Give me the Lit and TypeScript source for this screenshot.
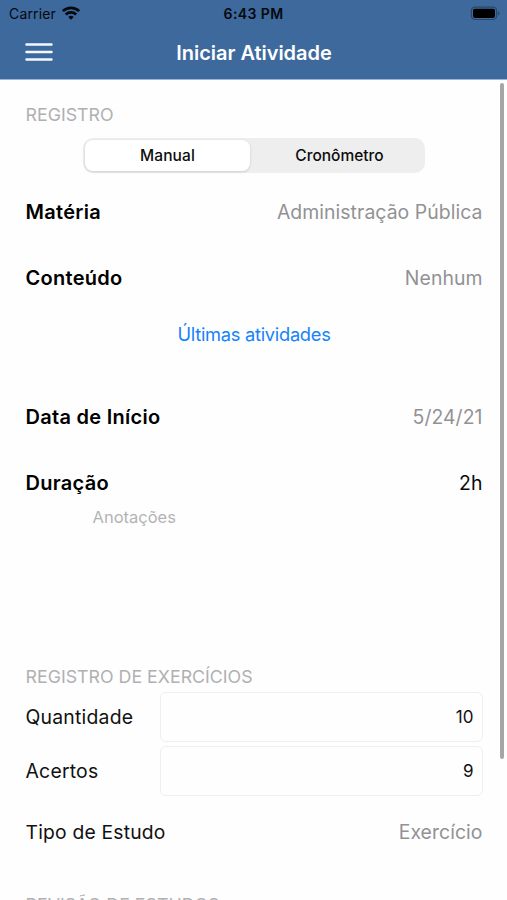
import { LitElement, html, css } from "lit";
import { customElement, property, state } from "lit/decorators.js";
import { classMap } from "lit/directives/class-map.js";

@customElement("status-bar")
class StatusBar extends LitElement {
  static styles = css`
    :host { display: grid; grid-template-columns: 1fr auto 1fr; align-items: center; height: 27px; padding: 0 7px 0 9px; color: #05080d; }
    .carrier { display: flex; align-items: center; gap: 6px; font-size: 14px; letter-spacing: 0.15px; }
    .time { font-size: 14px; font-weight: 600; letter-spacing: 0.4px; margin-right: 2px; }
    .battery { justify-self: end; display: block; }
    .wifi { display: block; margin-top: -2px; }
  `;
  render() {
    return html`
      <div class="carrier"><span>Carrier</span>
        <svg class="wifi" width="18" height="14" viewBox="0 0 18 14" fill="none" stroke="currentColor" stroke-width="2.7">
          <path d="M0.8 5.1a11.8 11.8 0 0 1 16.4 0" />
          <path d="M3.8 8.5a7.5 7.5 0 0 1 10.4 0" />
          <path d="M9 13.7L6.3 11a3.9 3.9 0 0 1 5.4 0z" fill="currentColor" stroke="none" />
        </svg>
      </div>
      <div class="time">6:43 PM</div>
      <svg class="battery" width="30" height="15" viewBox="0 0 30 15">
        <rect x="1.4" y="1.1" width="25.2" height="12.4" rx="3.6" fill="none" stroke="#294768" stroke-width="1.2" />
        <rect x="3" y="2.7" width="22" height="9.2" rx="1.8" fill="#000" />
        <path d="M28 5.2v4.2a2.3 2.3 0 0 0 0-4.2z" fill="#294768" />
      </svg>`;
  }
}

@customElement("nav-bar")
class NavBar extends LitElement {
  @property() heading = "";
  static styles = css`
    :host { display: grid; grid-template-columns: 1fr auto 1fr; align-items: center; height: 51px; padding: 0 24px 1px 25px; box-sizing: border-box; color: #fff; }
    .menu { display: block; }
    .title { padding-top: 2px; font-size: 20px; font-weight: 600; letter-spacing: -0.02px; }
  `;
  render() {
    return html`
      <svg class="menu" width="28" height="20" viewBox="0 0 28 20" stroke="#f4f8ff" stroke-width="2.5" stroke-linecap="round">
        <path d="M1.5 2.4h25M1.5 10h25M1.5 17.4h25" />
      </svg>
      <div class="title">${this.heading}</div>`;
  }
}

@customElement("segmented-control")
class SegmentedControl extends LitElement {
  @property({ attribute: false }) options: string[] = [];
  @state() selected = 0;
  static styles = css`
    :host { display: grid; grid-template-columns: 165px 1fr; gap: 5px; box-sizing: border-box; width: 342px; height: 35px; padding: 2px 1px 2px 2px; border-radius: 10px; background: #eeeeef; margin: 0 auto; }
    .segment { display: flex; align-items: center; justify-content: center; border-radius: 8px; font-size: 15.5px; font-weight: 500; color: #0c0c0c; }
    .active { background: #fff; box-shadow: 0 1px 3px rgba(0, 0, 0, 0.14); letter-spacing: 0.1px; }
  `;
  render() {
    return this.options.map((o, i) => html`
      <div class=${classMap({ segment: true, active: i === this.selected })} @click=${() => (this.selected = i)}>${o}</div>`);
  }
}

@customElement("form-row")
class FormRow extends LitElement {
  @property() label = "";
  @property() value = "";
  @property({ type: Boolean }) strong = false;
  @property({ type: Boolean }) dark = false;
  static styles = css`
    :host { display: flex; justify-content: space-between; align-items: center; height: 66px; font-size: 19.3px; }
    .label { color: #111; letter-spacing: 0.2px; }
    .strong { font-size: 20px; font-weight: 600; letter-spacing: 0.28px; color: #000; }
    .value { font-size: 19.4px; color: #929294; letter-spacing: 0.06px; }
    .dark { color: #0a0a0a; }
  `;
  render() {
    return html`
      <span class=${classMap({ label: true, strong: this.strong })}>${this.label}</span>
      <span class=${classMap({ value: true, dark: this.dark })}>${this.value}</span>`;
  }
}

@customElement("number-field")
class NumberField extends LitElement {
  @property() label = "";
  @property() value = "";
  static styles = css`
    :host { display: grid; grid-template-columns: 134px 1fr; align-items: center; height: 50px; font-size: 19.4px; letter-spacing: 0.22px; color: #111; }
    .box { display: flex; align-items: center; justify-content: flex-end; box-sizing: border-box; height: 50px; padding-right: 8px; border: 1px solid #efeff0; border-radius: 6px; font-size: 17px; letter-spacing: 0; }
  `;
  render() {
    return html`<span>${this.label}</span><div class="box">${this.value}</div>`;
  }
}

@customElement("app-root")
class AppRoot extends LitElement {
  static styles = css`
    :host { display: block; position: relative; height: 900px; overflow: hidden; background: #fefefe; font-family: Inter, "Liberation Sans", sans-serif; }
    .top { background: #3d699d; border-bottom: 1px solid #9db5d3; padding-bottom: 1px; }
    .content { padding: 0 24.5px 0 25.5px; }
    .section { height: 24px; line-height: 24px; font-size: 17.8px; color: #b0b0b2; white-space: nowrap; }
    .first { padding-top: 23px; margin-bottom: 11px; }
    .rows { margin-top: 6px; }
    .link { height: 24px; line-height: 24px; margin-top: 11px; margin-bottom: 38px; text-align: center; font-size: 18.3px; letter-spacing: -0.28px; color: #1583fa; }
    .notes { height: 160px; padding-left: 67px; line-height: 24px; margin-top: -11px; font-size: 16.5px; color: #b3b3b5; }
    .fields { display: grid; gap: 4px; margin-top: 3px; }
    .last { margin-top: 3px; }
    .next { margin-top: 28px; }
    .scrollbar { position: absolute; right: 3px; top: 83px; width: 4px; height: 676px; border-radius: 2px; background: #a6a6a6; }
  `;
  render() {
    return html`
      <div class="top">
        <status-bar></status-bar>
        <nav-bar heading="Iniciar Atividade"></nav-bar>
      </div>
      <div class="content">
        <div class="section first">REGISTRO</div>
        <segmented-control .options=${["Manual", "Cronômetro"]}></segmented-control>
        <div class="rows">
          <form-row strong label="Matéria" value="Administração Pública"></form-row>
          <form-row strong label="Conteúdo" value="Nenhum"></form-row>
        </div>
        <div class="link">Últimas atividades</div>
        <form-row strong label="Data de Início" value="5/24/21"></form-row>
        <form-row strong dark label="Duração" value="2h"></form-row>
        <div class="notes">Anotações</div>
        <div class="section">REGISTRO DE EXERCÍCIOS</div>
        <div class="fields">
          <number-field label="Quantidade" value="10"></number-field>
          <number-field label="Acertos" value="9"></number-field>
        </div>
        <form-row class="last" label="Tipo de Estudo" value="Exercício"></form-row>
        <div class="section next">REVISÃO DE ESTUDOS</div>
      </div>
      <div class="scrollbar"></div>`;
  }
}
